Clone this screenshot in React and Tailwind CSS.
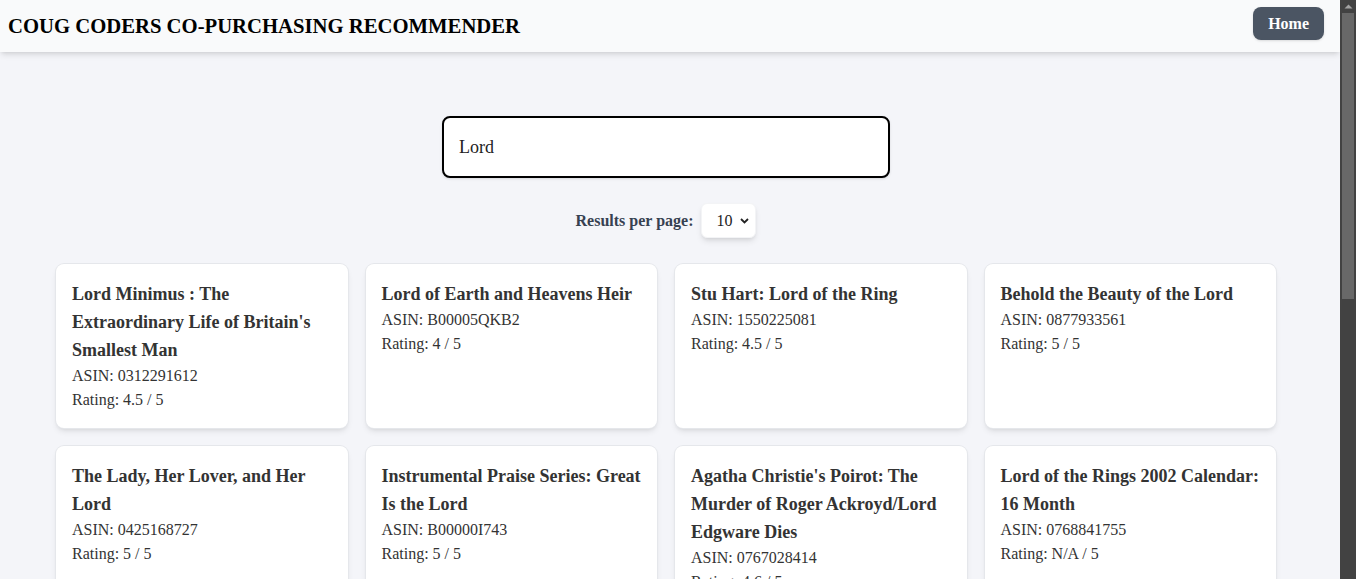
import React, { useState } from "react";

const results = [
  { title: "Lord Minimus : The Extraordinary Life of Britain's Smallest Man", asin: "0312291612", rating: "4.5" },
  { title: "Lord of Earth and Heavens Heir", asin: "B00005QKB2", rating: "4" },
  { title: "Stu Hart: Lord of the Ring", asin: "1550225081", rating: "4.5" },
  { title: "Behold the Beauty of the Lord", asin: "0877933561", rating: "5" },
  { title: "The Lady, Her Lover, and Her Lord", asin: "0425168727", rating: "5" },
  { title: "Instrumental Praise Series: Great Is the Lord", asin: "B00000I743", rating: "5" },
  { title: "Agatha Christie's Poirot: The Murder of Roger Ackroyd/Lord Edgware Dies", asin: "0767028414", rating: "4.6" },
  { title: "Lord of the Rings 2002 Calendar: 16 Month", asin: "0768841755", rating: "N/A" },
  { title: "The Lord of the Rings: The Fellowship of the Ring", asin: "0618002227", rating: "4.5" },
  { title: "Lord of the Flies", asin: "0399501487", rating: "4" },
];

function ResultCard({ title, asin, rating }) {
  return (
    <div className="bg-white rounded-lg ring-1 ring-gray-200 shadow-md p-4 text-[#333]">
      <h3 className="text-lg leading-7 font-bold">{title}</h3>
      <p className="text-base leading-6">ASIN: {asin}</p>
      <p className="text-base leading-6">Rating: {rating} / 5</p>
    </div>
  );
}

// the window's own scrollbar, drawn since the headless page shows none
function Scrollbar() {
  return (
    <div className="w-4 shrink-0 h-full bg-[#424242] flex flex-col items-center">
      <svg className="mt-[3px]" width="9" height="6" viewBox="0 0 9 6">
        <path d="M0.5 5.5L4.5 1.5L8.5 5.5Z" fill="#a3a3a3" />
      </svg>
      <div className="mt-[4px] w-[12px] h-[286px] bg-[#686868]" />
    </div>
  );
}

export default function App() {
  const [query, setQuery] = useState("Lord");
  const [perPage, setPerPage] = useState("10");

  return (
    <div
      className="flex h-screen overflow-hidden"
      style={{ fontFamily: '"Liberation Serif", "Times New Roman", serif' }}
    >
      <div className="flex-1 min-w-0 h-full overflow-hidden bg-[#f4f5f9]">
        <header className="h-[52px] bg-[#f9fafb] shadow-md flex items-center justify-between pl-2 pr-4 relative z-10">
          <h1 className="text-[20.7px] leading-7 font-bold text-black">
            COUG CODERS CO-PURCHASING RECOMMENDER
          </h1>
          <button className="h-[33px] mb-[5px] px-[15px] bg-[#4b5563] text-white font-semibold text-base rounded-lg shadow">
            Home
          </button>
        </header>

        <main className="flex flex-col items-center pt-16 pr-2 pb-10">
          <input
            type="text"
            value={query}
            onChange={(e) => setQuery(e.target.value)}
            className="w-[448px] h-[62px] bg-white border-2 border-black rounded-lg pl-[15px] pr-4 text-lg text-[#222] outline-none shadow-sm"
          />

          <div className="mt-[25px] flex items-center gap-2">
            <label className="font-bold text-base text-[#374151]">Results per page:</label>
            <div className="relative">
              <select
                value={perPage}
                onChange={(e) => setPerPage(e.target.value)}
                className="appearance-none h-[35px] w-[55px] bg-white rounded-md shadow-md border border-gray-100 pl-[14px] text-base text-[#222] outline-none"
              >
                <option value="10">10</option>
                <option value="20">20</option>
                <option value="50">50</option>
              </select>
              <svg
                className="absolute right-[7px] top-1/2 -translate-y-1/2 pointer-events-none"
                width="9"
                height="6"
                viewBox="0 0 9 6"
              >
                <path d="M1 1l3.5 3.5L8 1" fill="none" stroke="#222" strokeWidth="1.8" />
              </svg>
            </div>
          </div>

          <div className="mt-[26px] w-full px-[56px] grid grid-cols-4 gap-[18px]">
            {results.map((r) => (
              <ResultCard key={r.asin} {...r} />
            ))}
          </div>

          <div className="mt-8 flex items-center gap-3">
            <button className="px-4 py-2 bg-[#4b5563] text-white rounded-lg font-semibold">Previous</button>
            <span className="text-[#374151] font-bold">Page 1</span>
            <button className="px-4 py-2 bg-[#4b5563] text-white rounded-lg font-semibold">Next</button>
          </div>
        </main>
      </div>
      <Scrollbar />
    </div>
  );
}
